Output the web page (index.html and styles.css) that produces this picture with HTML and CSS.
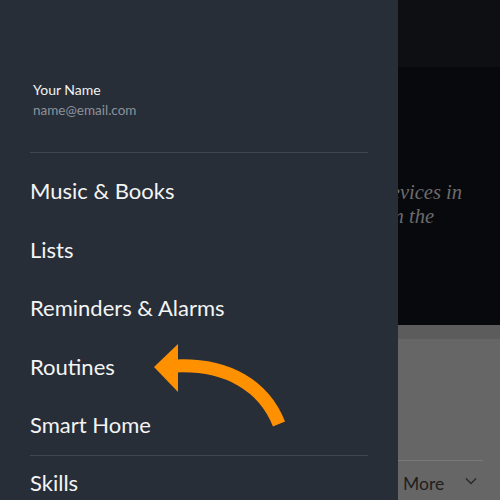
FILE: index.html
```html
<!DOCTYPE html>
<html>
<head>
<meta charset="utf-8">
<link rel="stylesheet" href="styles.css">
</head>
<body>
<div class="screen">
  <div class="backdrop">
    <div class="topbar"></div>
    <div class="hero">
      <div class="line l1">Control your smart home devices in</div>
      <div class="line l2">one place from the</div>
    </div>
    <div class="band"></div>
    <div class="card">
      <div class="rule"></div>
      <div class="more">
        <span>More</span>
        <svg class="chev" width="12" height="8" viewBox="0 0 12 8"><path d="M1 1.5 L6 6.5 L11 1.5" fill="none" stroke="#2a2a2a" stroke-width="1.4"/></svg>
      </div>
    </div>
  </div>
  <nav class="drawer">
    <div class="profile">
      <div class="name">Your Name</div>
      <div class="email">name@email.com</div>
    </div>
    <div class="divider"></div>
    <ul class="menu">
      <li>Music &amp; Books</li>
      <li>Lists</li>
      <li>Reminders &amp; Alarms</li>
      <li>Routines</li>
      <li>Smart Home</li>
    </ul>
    <div class="divider"></div>
    <ul class="menu second">
      <li>Skills</li>
    </ul>
  </nav>
  <svg class="arrow" width="500" height="500" viewBox="0 0 500 500">
    <path d="M176 366 C228 364 264 386 279 424" fill="none" stroke="#ff9000" stroke-width="13"/>
    <polygon points="154,367 178,344 178,392" fill="#ff9000"/>
  </svg>
</div>
</body>
</html>
```
FILE: styles.css
```css
html, body {
  margin: 0;
  padding: 0;
}
body {
  width: 500px;
  height: 500px;
  overflow: hidden;
  background: #08090c;
}
.screen {
  position: relative;
  width: 500px;
  height: 500px;
  overflow: hidden;
}
.backdrop {
  display: flex;
  flex-direction: column;
  height: 500px;
}
.backdrop > * {
  flex-shrink: 0;
}
.topbar {
  height: 67px;
  background: #0e0f12;
}
.hero {
  height: 258px;
  background: #08090c;
  display: flex;
  flex-direction: column;
  padding-top: 113px;
  box-sizing: border-box;
  font-family: "Liberation Serif", "DejaVu Serif", serif;
  font-style: italic;
  font-size: 20.5px;
  color: #6c6c6c;
}
.line {
  white-space: nowrap;
  text-align: right;
  height: 24px;
  line-height: 24px;
}
.l1 { padding-right: 38px; }
.l2 { padding-right: 66px; }
.band {
  height: 14px;
  background: #5c5c5c;
}
.card {
  height: 161px;
  overflow: hidden;
  background: #666666;
  padding-top: 121px;
  box-sizing: border-box;
}
.rule {
  margin-left: 398px;
  width: 85px;
  height: 1px;
  background: #7a7a7a;
}
.more {
  display: flex;
  align-items: center;
  padding-left: 403px;
  height: 44px;
  font-family: "Lato", "Liberation Sans", sans-serif;
  font-size: 17.5px;
  color: #1e1e1e;
}
.chev {
  margin-left: 21px;
  margin-top: -4px;
}
.drawer {
  position: absolute;
  left: 0;
  top: 0;
  width: 398px;
  height: 500px;
  background: #272e38;
  padding: 80px 30px 0 30px;
  box-sizing: border-box;
  font-family: "Lato", "Liberation Sans", sans-serif;
}
.profile {
  padding-left: 3px;
  height: 72px;
}
.name {
  font-size: 14px;
  color: #f2f2f2;
  line-height: 20px;
}
.email {
  font-size: 13.5px;
  color: #8b929b;
  line-height: 20px;
}
.divider {
  height: 1px;
  background: #3f4651;
}
.menu {
  list-style: none;
  margin: 9px 0 0 0;
  padding: 0;
}
.menu li {
  font-size: 22px;
  color: #f4f4f4;
  height: 58.5px;
  line-height: 58.5px;
}
.menu.second {
  margin-top: -2px;
}
.arrow {
  position: absolute;
  left: 0;
  top: 0;
  pointer-events: none;
}
```
